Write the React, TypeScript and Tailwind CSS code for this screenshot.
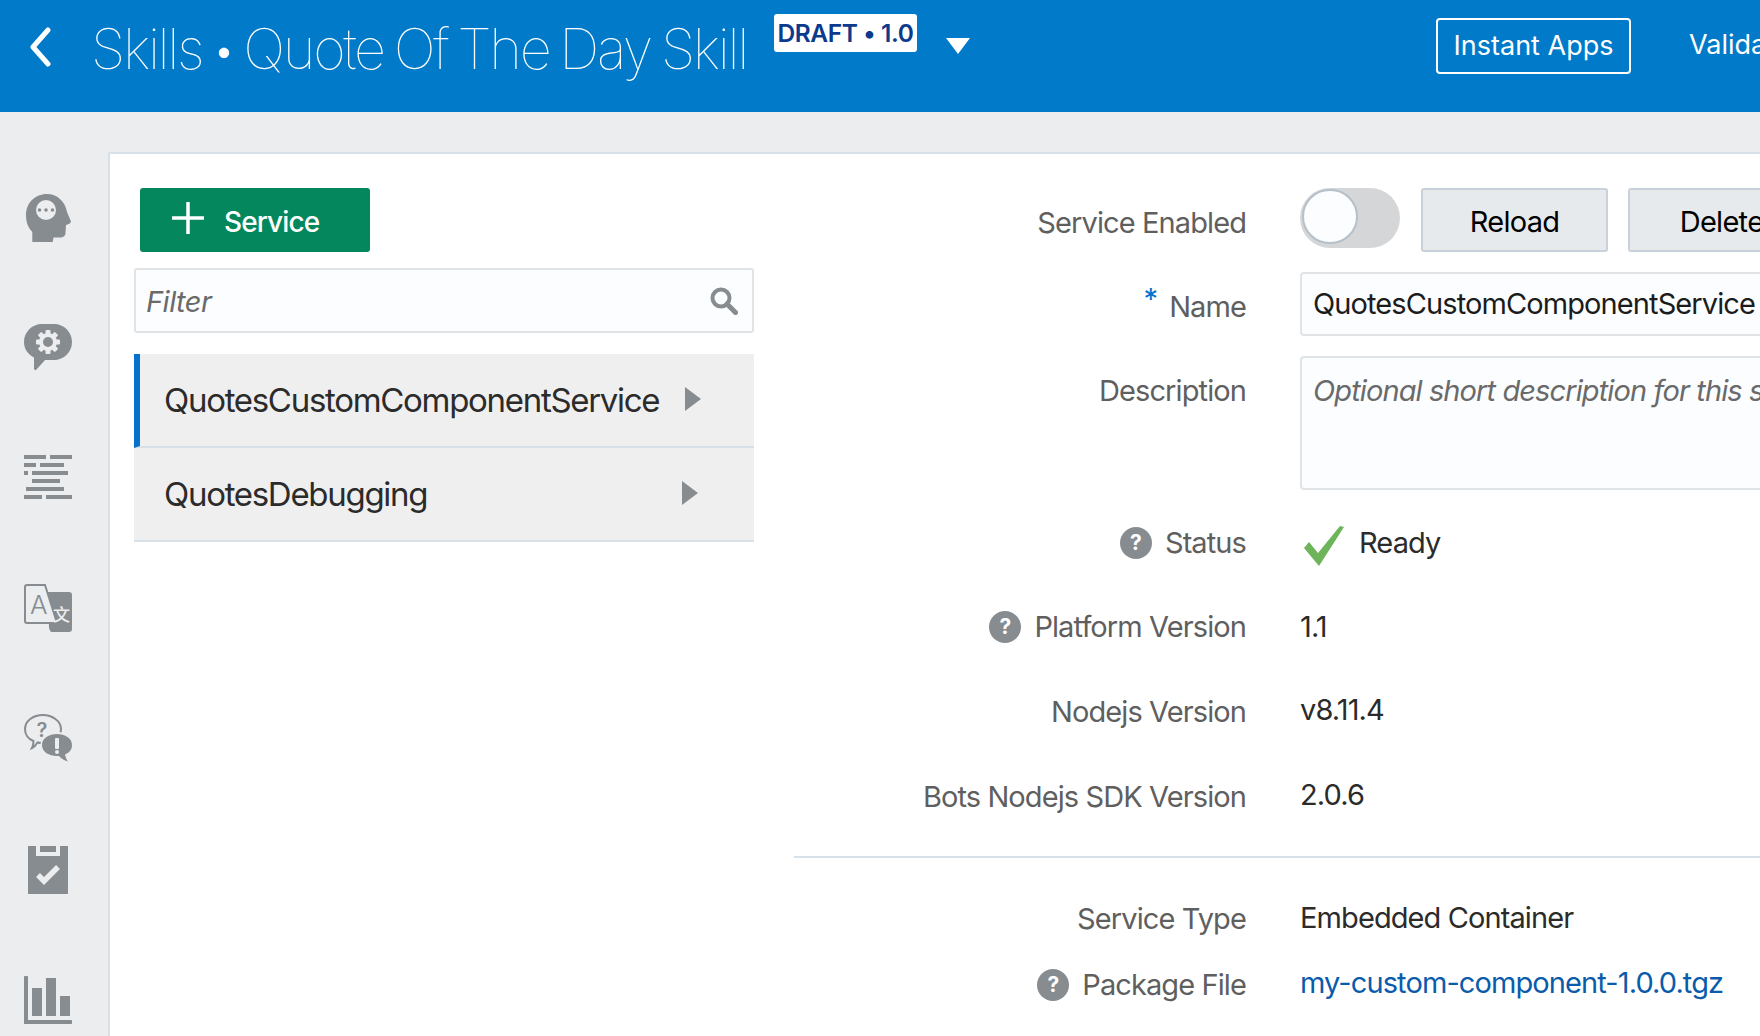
import type { ReactNode } from "react";

const GRAY = "#878c90";
const BG = "#ecedef";

function HeadIcon() {
  return (
    <svg width="48" height="48" viewBox="0 0 48 48">
      <path
        fill={GRAY}
        d="M8.3 48 V38 C3.5 33 2 27 2 21 C2 9 11 0 23 0 C33 0 41 7 43 18 L47 27.5 C47 29 44 30.5 42 31 L41.5 39 C41.5 42 39 43.5 36 43.5 L29.5 43.5 L28.7 48 Z"
      />
      <circle cx="22" cy="16" r="10" fill={BG} />
      <circle cx="15.5" cy="16" r="1.8" fill={GRAY} />
      <circle cx="22" cy="16" r="1.8" fill={GRAY} />
      <circle cx="28.5" cy="16" r="1.8" fill={GRAY} />
    </svg>
  );
}

function GearBubbleIcon() {
  return (
    <svg width="48" height="48" viewBox="0 0 48 48">
      <path
        fill={GRAY}
        d="M18 0 H30 C40 0 48 8 48 18 C48 28 40 36 30 36 H21 L12.5 45.5 C11.5 46.5 10 46 10 44.5 V33.5 C4 30.5 0 25 0 18 C0 8 8 0 18 0 Z"
      />
      <g fill={BG}>
        <circle cx="24" cy="18" r="9" />
        {[0, 45, 90, 135].map((a) => (
          <rect key={a} x="21.5" y="6" width="5" height="24" rx="1" transform={`rotate(${a} 24 18)`} />
        ))}
      </g>
      <circle cx="24" cy="18" r="5" fill={GRAY} />
    </svg>
  );
}

function LinesIcon() {
  const bars = [
    [0, 1, 22],
    [26, 1, 22],
    [0, 9, 12],
    [16, 9, 24],
    [0, 17, 4],
    [8, 17, 36],
    [8, 25, 28],
    [2, 33, 38],
    [0, 41, 18],
    [22, 41, 26],
  ];
  return (
    <svg width="48" height="48" viewBox="0 0 48 48">
      {bars.map(([x, y, w]) => (
        <rect key={`${x}-${y}`} x={x} y={y} width={w} height="4" fill={GRAY} />
      ))}
    </svg>
  );
}

function TranslateIcon() {
  return (
    <svg width="48" height="48" viewBox="0 0 48 48">
      <path fill={GRAY} d="M24 8 H45 C47 8 48 9 48 11 V45 C48 47 47 48 45 48 H28 C26 48 26 46 25 44 Z" />
      <path
        fill={BG}
        stroke={GRAY}
        strokeWidth="2"
        d="M3 1 H21 L33 39 H3 C2 39 1 38 1 37 V3 C1 2 2 1 3 1 Z"
      />
      <text x="6" y="30" fontSize="26" fontFamily="Inter, sans-serif" fontWeight="300" fill={GRAY}>
        A
      </text>
      <text x="29" y="37" fontSize="17" fontFamily="'Noto Sans CJK SC', sans-serif" fontWeight="500" fill={BG}>
        文
      </text>
    </svg>
  );
}

function QuestionsIcon() {
  return (
    <svg width="48" height="48" viewBox="0 0 48 48">
      <path
        fill="none"
        stroke={GRAY}
        strokeWidth="2"
        d="M19 1 C28 1 37 7 37 15 C37 23 29 29 19 29 C17 29 15 29 13.5 28.5 C12 31 10 33 8 34 C9 32 9.5 30 9.5 27 C4 25 1 20 1 15 C1 7 9 1 19 1 Z"
      />
      <text x="12.5" y="23" fontSize="20" fontFamily="Inter, sans-serif" fontWeight="600" fill={GRAY}>
        ?
      </text>
      <ellipse cx="33" cy="30.5" rx="16.5" ry="12.5" fill={BG} />
      <path
        fill={GRAY}
        d="M33 20 C41 20 48 24 48 31 C48 36 45 39 41 40.5 C41.5 43 42.5 45.5 44 47.5 C40 46.5 37 44.5 35 42 H33 C25 42 18 38 18 31 C18 24 25 20 33 20 Z"
      />
      <rect x="31" y="24" width="4" height="11" rx="1" fill={BG} />
      <circle cx="33" cy="38" r="2" fill={BG} />
    </svg>
  );
}

function ClipboardIcon() {
  return (
    <svg className="mt-[2px]" width="48" height="48" viewBox="0 0 48 48">
      <path fill={GRAY} d="M5 0 H43 C43.6 0 44 0.4 44 1 V47 C44 47.6 43.6 48 43 48 H5 C4.4 48 4 47.6 4 47 V1 C4 0.4 4.4 0 5 0 Z" />
      <rect x="12" y="0" width="24" height="10" fill={BG} />
      <rect x="16" y="0" width="16" height="6" fill={GRAY} />
      <path d="M14 29 L20 35 L34 21" fill="none" stroke={BG} strokeWidth="5.5" />
    </svg>
  );
}

function ChartIcon() {
  return (
    <svg width="48" height="48" viewBox="0 0 48 48">
      <path fill={GRAY} d="M0 1 C0 0.4 0.4 0 1 0 H3 C3.6 0 4 0.4 4 1 V44 H47 C47.6 44 48 44.4 48 45 V47 C48 47.6 47.6 48 47 48 H0 Z" />
      <rect x="8" y="12" width="10" height="28" fill={GRAY} />
      <rect x="22" y="2" width="10" height="38" fill={GRAY} />
      <rect x="36" y="20" width="10" height="20" fill={GRAY} />
    </svg>
  );
}

function HelpDot() {
  return (
    <span className="flex h-[32px] w-[32px] shrink-0 items-center justify-center rounded-full bg-[#878c90] text-[21px] font-bold tracking-normal text-white">
      ?
    </span>
  );
}

function Row({
  label,
  help,
  className,
  labelClass = "",
  valueClass = "",
  children,
}: {
  label: ReactNode;
  help?: boolean;
  className: string;
  labelClass?: string;
  valueClass?: string;
  children: ReactNode;
}) {
  return (
    <div className={`flex items-center ${className}`}>
      <div className={`flex w-[452px] shrink-0 items-center justify-end gap-[13px] text-[29px] tracking-[-0.9px] text-[#5f5f5f] ${labelClass}`}>
        {help && <HelpDot />}
        <span>{label}</span>
      </div>
      <div className={`ml-[54px] flex items-center whitespace-nowrap text-[29px] tracking-[-0.9px] text-[#2b2b2b] ${valueClass}`}>
        {children}
      </div>
    </div>
  );
}

const sideIcons = [
  <HeadIcon key="head" />,
  <GearBubbleIcon key="gear" />,
  <LinesIcon key="lines" />,
  <TranslateIcon key="translate" />,
  <QuestionsIcon key="questions" />,
  <ClipboardIcon key="clipboard" />,
  <ChartIcon key="chart" />,
];

const services = [
  { name: "QuotesCustomComponentService", selected: true, arrow: "ml-[26px]" },
  { name: "QuotesDebugging", selected: false, arrow: "ml-auto mr-[56px]" },
];

export default function App() {
  return (
    <div className="flex h-[1036px] w-[1760px] flex-col overflow-hidden bg-[#ecedef] font-['Inter',sans-serif]">
      {/* Top bar */}
      <header className="flex h-[112px] shrink-0 items-start overflow-hidden bg-[#007ac9] text-white">
        <svg className="ml-[28px] mt-[27px] shrink-0" width="24" height="40" viewBox="0 0 24 40">
          <path d="M20 3 L5 20 L20 37" fill="none" stroke="white" strokeWidth="5" strokeLinecap="round" strokeLinejoin="round" />
        </svg>
        <h1 className="ml-[39px] mt-[14px] w-[653px] shrink-0 whitespace-nowrap text-[56px] font-thin leading-[70px] tracking-[-2.35px] [word-spacing:-3.5px]">
          <span className="[word-spacing:-7.5px]">Skills • </span>Quote Of The Day Skill
        </h1>
        <span className="ml-[30px] mt-[14px] flex h-[38px] w-[143px] shrink-0 items-center justify-center rounded-[3px] bg-white text-[24.5px] font-semibold tracking-[-0.4px] text-[#0c3a8c]">
          DRAFT • 1.0
        </span>
        <span className="ml-[29px] mt-[38px] h-0 w-0 shrink-0 border-x-[12px] border-t-[16px] border-x-transparent border-t-white" />
        <button className="ml-[466px] mt-[18px] flex h-[56px] w-[195px] shrink-0 items-center justify-center rounded-[4px] border-2 border-white text-[27px] font-normal">
          Instant Apps
        </button>
        <span className="ml-[58px] mt-[28px] whitespace-nowrap text-[27px] leading-[34px]">Validate</span>
      </header>

      <div className="flex min-h-0 flex-1">
        {/* Icon rail */}
        <nav className="flex w-[108px] shrink-0 flex-col gap-[82px] pl-[24px] pt-[82px]">
          {sideIcons}
        </nav>

        <main className="mt-[40px] flex min-w-0 flex-1 border-l-2 border-t-2 border-[#d9e1e8] bg-white">
          {/* Service list */}
          <section className="ml-[24px] w-[620px] shrink-0 pt-[34px]">
            <button className="ml-[6px] flex h-[64px] w-[230px] items-center rounded-[3px] bg-[#04875c] pl-[32px] pt-[3px] text-[28px] font-medium tracking-[-0.9px] text-white">
              <svg width="32" height="32" viewBox="0 0 32 32" className="mb-[7px] mr-[20px] shrink-0">
                <path d="M16 0 V32 M0 16 H32" stroke="white" strokeWidth="3.5" />
              </svg>
              Service
            </button>
            <div className="mt-[16px] flex h-[65px] items-center rounded-[3px] border-2 border-[#e0e4e6] bg-[#fbfdff] pl-[10px] pr-[14px]">
              <span className="pt-[2px] text-[29px] italic tracking-[-0.5px] text-[#6a6a6a]">Filter</span>
              <svg className="ml-auto" width="28" height="28" viewBox="0 0 28 28">
                <circle cx="11" cy="11" r="8.5" fill="none" stroke={GRAY} strokeWidth="4" />
                <path d="M17 17 L25.5 25.5" stroke={GRAY} strokeWidth="5" strokeLinecap="round" />
              </svg>
            </div>
            <ul className="mt-[21px]">
              {services.map((s) => (
                <li
                  key={s.name}
                  className={`flex h-[94px] items-center border-b-2 border-[#d9e1e8] bg-[#efefef] text-[33px] tracking-[-1.3px] text-[#2b2b2b] ${
                    s.selected ? "border-l-[6px] border-l-[#0572ce] pl-[24px]" : "pl-[30px]"
                  }`}
                >
                  <span className="pt-[2px]">{s.name}</span>
                  <span className={`mb-[3px] h-0 w-0 border-y-[12px] border-l-[16px] border-y-transparent border-l-[#878c90] ${s.arrow}`} />
                </li>
              ))}
            </ul>
          </section>

          {/* Service form */}
          <section className="ml-[40px] min-w-0 flex-1 pt-[34px]">
            <Row label="Service Enabled" labelClass="pt-[6px]" className="h-[64px]">
              <span className="flex h-[60px] w-[100px] items-start self-start rounded-full bg-[#d5d6d8] pl-[2px] pt-[1px]">
                <span className="h-[55px] w-[56px] rounded-full border-2 border-[#b6c0c9] bg-[#fbfdff]" />
              </span>
              <button className="ml-[21px] h-[64px] w-[187px] rounded-[3px] border-2 border-[#c9d2da] bg-[#e7eaed] pt-[3px] text-[29px] tracking-[-0.7px] text-black">
                Reload
              </button>
              <button className="ml-[20px] h-[64px] w-[187px] rounded-[3px] border-2 border-[#c9d2da] bg-[#e7eaed] pt-[3px] text-[29px] tracking-[-0.7px] text-black">
                Delete
              </button>
            </Row>
            <Row
              label={
                <>
                  <span className="relative -top-[8px] mr-[12px] text-[#0572ce]">*</span>Name
                </>
              }
              labelClass="pt-[6px]"
              className="mt-[20px] h-[64px]"
            >
              <div className="flex h-[64px] w-[700px] items-center rounded-[4px] border-2 border-[#e0e4e6] bg-[#fbfdff] pl-[11px] text-[#1c1c1c]">
                QuotesCustomComponentService
              </div>
            </Row>
            <div className="mt-[20px] flex h-[134px] items-start">
              <div className="mt-[13px] w-[452px] shrink-0 text-right text-[29px] tracking-[-0.9px] text-[#5f5f5f]">
                Description
              </div>
              <div className="ml-[54px] h-[134px] w-[700px] shrink-0 whitespace-nowrap rounded-[4px] border-2 border-[#e0e4e6] bg-[#fbfdff] pl-[11px] pt-[11px] text-[29px] italic tracking-[-0.9px] text-[#6a6a6a]">
                Optional short description for this service
              </div>
            </div>
            <Row label="Status" help className="mt-[11px] h-[84px]">
              <svg width="40" height="40" viewBox="0 0 40 40" className="ml-[4px] mr-[15px] mt-[6px]">
                <path d="M0 22 L5 16 L14 27 L36 0 L40 1 L15 40 Z" fill="#6eb45a" />
              </svg>
              Ready
            </Row>
            <Row label="Platform Version" help className="h-[84px]">
              1.1
            </Row>
            <Row label="Nodejs Version" valueClass="pb-[4px]" className="h-[86px]">
              v8.11.4
            </Row>
            <Row label="Bots Nodejs SDK Version" valueClass="pb-[4px]" className="h-[84px]">
              2.0.6
            </Row>
            <hr className="mt-[17px] border-t-2 border-[#d9e1e8]" />
            <Row label="Service Type" valueClass="pb-[2px]" className="mt-[30px] h-[62px]">
              Embedded Container
            </Row>
            <Row label="Package File" help valueClass="pb-[4px]" className="mt-[4px] h-[62px]">
              <span className="text-[#0a5cab]">my-custom-component-1.0.0.tgz</span>
            </Row>
          </section>
        </main>
      </div>
    </div>
  );
}
